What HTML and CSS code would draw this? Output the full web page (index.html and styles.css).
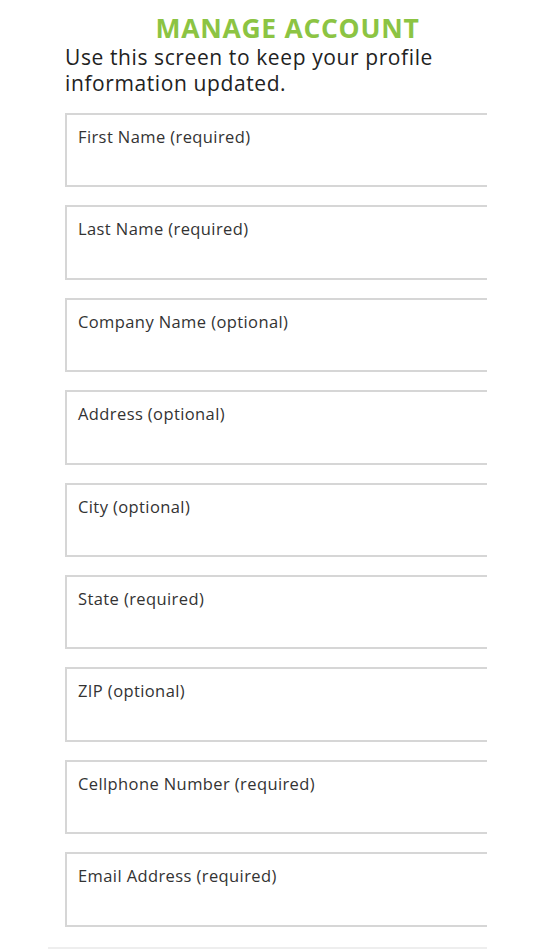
FILE: index.html
```html
<!DOCTYPE html>
<html>
<head>
<meta charset="utf-8">
<link rel="stylesheet" href="styles.css">
</head>
<body>
<div class="page">
  <h1 class="title">MANAGE ACCOUNT</h1>
  <p class="intro">Use this screen to keep your profile information updated.</p>
  <div class="form">
    <div class="field"><span class="label">First Name (required)</span></div>
    <div class="field"><span class="label">Last Name (required)</span></div>
    <div class="field"><span class="label">Company Name (optional)</span></div>
    <div class="field"><span class="label">Address (optional)</span></div>
    <div class="field"><span class="label">City (optional)</span></div>
    <div class="field"><span class="label">State (required)</span></div>
    <div class="field"><span class="label">ZIP (optional)</span></div>
    <div class="field"><span class="label">Cellphone Number (required)</span></div>
    <div class="field"><span class="label">Email Address (required)</span></div>
  </div>
  <div class="divider"></div>
</div>
</body>
</html>
```
FILE: styles.css
```css
html, body {
  margin: 0;
  padding: 0;
  background: #ffffff;
}
body {
  font-family: "Open Sans", "Noto Sans", sans-serif;
  color: #222222;
}
.page {
  padding: 12px 0 0 65px;
  width: 445px;
}
.title {
  margin: 0;
  font-size: 26.5px;
  line-height: 32px;
  font-weight: 700;
  letter-spacing: 0.7px;
  color: #8cc443;
  text-align: center;
}
.intro {
  margin: 0;
  font-size: 21px;
  line-height: 26px;
  letter-spacing: 0.6px;
  width: 422px;
}
.form {
  margin-top: 17px;
  width: 422px;
  overflow: hidden;
  display: flex;
  flex-direction: column;
  gap: 18px;
}
.field {
  box-sizing: border-box;
  width: 460px;
  height: 74.4px;
  flex: none;
  border: 2px solid #d6d6d6;
  padding: 11px 11px;
}
.label {
  font-size: 16.5px;
  line-height: 22px;
  letter-spacing: 0.4px;
  color: #333333;
}
.divider {
  margin: 20px 0 0 -17px;
  width: 439px;
  height: 2px;
  background: #eeeeee;
}
```
